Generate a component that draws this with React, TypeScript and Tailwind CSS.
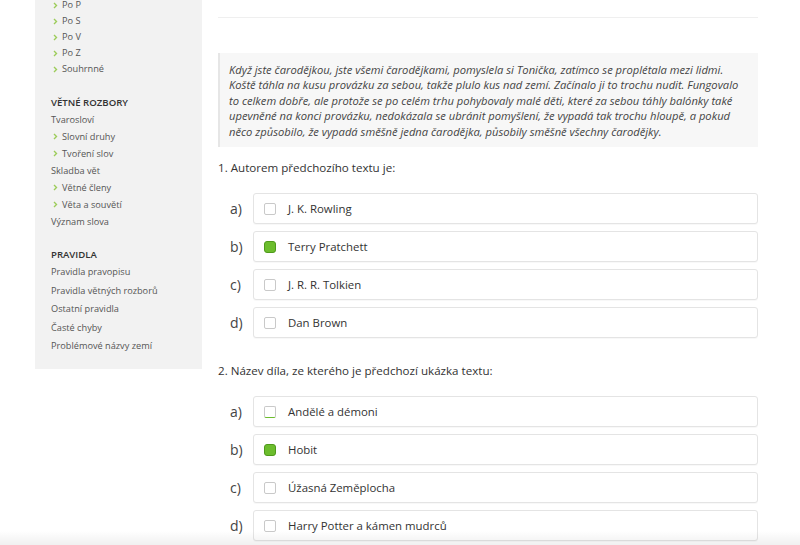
import React from 'react';

type SideItem = { label: string; kind: 'sub' | 'top' | 'head'; h: string; mt?: string };

const sideItems: SideItem[] = [
  { label: 'Po P', kind: 'sub', h: 'h-[16px]' },
  { label: 'Po S', kind: 'sub', h: 'h-[16px]' },
  { label: 'Po V', kind: 'sub', h: 'h-[16px]' },
  { label: 'Po Z', kind: 'sub', h: 'h-[16px]' },
  { label: 'Souhrnné', kind: 'sub', h: 'h-[16px]' },
  { label: 'VĚTNÉ ROZBORY', kind: 'head', h: 'h-[16px]', mt: 'mt-[18px]' },
  { label: 'Tvarosloví', kind: 'top', h: 'h-[17px]' },
  { label: 'Slovní druhy', kind: 'sub', h: 'h-[17px]' },
  { label: 'Tvoření slov', kind: 'sub', h: 'h-[17px]' },
  { label: 'Skladba vět', kind: 'top', h: 'h-[17px]' },
  { label: 'Větné členy', kind: 'sub', h: 'h-[17px]' },
  { label: 'Věta a souvětí', kind: 'sub', h: 'h-[17px]' },
  { label: 'Význam slova', kind: 'top', h: 'h-[18px]' },
  { label: 'PRAVIDLA', kind: 'head', h: 'h-[16px]', mt: 'mt-[16px]' },
  { label: 'Pravidla pravopisu', kind: 'top', h: 'h-[18.5px]' },
  { label: 'Pravidla větných rozborů', kind: 'top', h: 'h-[18.5px]' },
  { label: 'Ostatní pravidla', kind: 'top', h: 'h-[18.5px]' },
  { label: 'Časté chyby', kind: 'top', h: 'h-[18.5px]' },
  { label: 'Problémové názvy zemí', kind: 'top', h: 'h-[18.5px]' },
];

interface Option {
  letter: string;
  text: string;
  checked?: boolean;
  hover?: boolean;
}

const q1: Option[] = [
  { letter: 'a)', text: 'J. K. Rowling' },
  { letter: 'b)', text: 'Terry Pratchett', checked: true },
  { letter: 'c)', text: 'J. R. R. Tolkien' },
  { letter: 'd)', text: 'Dan Brown' },
];

const q2: Option[] = [
  { letter: 'a)', text: 'Andělé a démoni', hover: true },
  { letter: 'b)', text: 'Hobit', checked: true },
  { letter: 'c)', text: 'Úžasná Zeměplocha' },
  { letter: 'd)', text: 'Harry Potter a kámen mudrců' },
];

const quote = [
  'Když jste čarodějkou, jste všemi čarodějkami, pomyslela si Tonička, zatímco se proplétala mezi lidmi.',
  'Koště táhla na kusu provázku za sebou, takže plulo kus nad zemí. Začínalo ji to trochu nudit. Fungovalo',
  'to celkem dobře, ale protože se po celém trhu pohybovaly malé děti, které za sebou táhly balónky také',
  'upevněné na konci provázku, nedokázala se ubránit pomyšlení, že vypadá tak trochu hloupě, a pokud',
  'něco způsobilo, že vypadá směšně jedna čarodějka, působily směšně všechny čarodějky.',
];

function Chevron() {
  return (
    <svg width="5" height="7" viewBox="0 0 5 7" className="mr-[4px] shrink-0">
      <path d="M1 1 L3.5 3.5 L1 6" stroke="#9ccc5a" strokeWidth="1.4" fill="none" />
    </svg>
  );
}

function OptionRow({ opt }: { opt: Option }) {
  return (
    <div className="flex items-center">
      <span className="w-[35px] pl-[12px] text-[14px] text-[#444]">{opt.letter}</span>
      <div className="flex h-[31px] flex-1 items-center rounded-[3px] border border-[#e4e4e4] bg-white pl-[10px] shadow-[0_1px_1px_rgba(0,0,0,0.03)]">
        {opt.checked ? (
          <span className="h-[12px] w-[12px] rounded-[3px] border border-[#4f9a1c] bg-[#6cbd2d]" />
        ) : (
          <span
            className={
              'h-[12px] w-[12px] rounded-[2px] border border-[#c9c9c9] bg-white ' +
              (opt.hover ? 'border-b-[#6cbd2d]' : '')
            }
          />
        )}
        <span className="ml-[12px] text-[11.4px] text-[#333]">{opt.text}</span>
      </div>
    </div>
  );
}

export default function App() {
  return (
    <div className="relative h-[545px] w-[800px] overflow-hidden bg-white font-['Open_Sans',sans-serif]">
      <div className="flex">
        {/* sidebar */}
        <aside className="ml-[35px] w-[167px] self-start bg-[#f2f2f2] pb-[13.5px] pl-[16px]">
          <div className="mt-[-3px]">
            {sideItems.map((it, i) => (
              <div key={i} className={'flex items-center ' + it.h + ' ' + (it.mt ?? '')}>
                {it.kind === 'sub' && (
                  <span className="ml-[2px] flex items-center">
                    <Chevron />
                  </span>
                )}
                <span
                  className={
                    it.kind === 'head'
                      ? 'text-[9.6px] font-semibold text-[#333]'
                      : 'text-[9.2px] text-[#555]'
                  }
                >
                  {it.label}
                </span>
              </div>
            ))}
          </div>
        </aside>

        {/* main content */}
        <main className="ml-[16px] w-[540px]">
          <div className="mt-[17px] h-px bg-[#efefef]" />

          <blockquote className="mt-[35px] border-l-2 border-[#e6e6e6] bg-[#f7f7f7] pb-[8px] pl-[9px] pr-[10px] pt-[9px] text-[11.2px] italic leading-[15.4px] text-[#444]">
            {quote.map((line, i) => (
              <div key={i} className="whitespace-nowrap">
                {line}
              </div>
            ))}
          </blockquote>

          <p className="mt-[11px] h-[20px] text-[11.6px] leading-[20px] text-[#333]">1. Autorem předchozího textu je:</p>
          <div className="mt-[15px] flex flex-col gap-[7px]">
            {q1.map((o) => (
              <OptionRow key={o.letter} opt={o} />
            ))}
          </div>

          <p className="mt-[23px] h-[20px] text-[11.6px] leading-[20px] text-[#333]">
            2. Název díla, ze kterého je předchozí ukázka textu:
          </p>
          <div className="mt-[15px] flex flex-col gap-[7px]">
            {q2.map((o) => (
              <OptionRow key={o.letter} opt={o} />
            ))}
          </div>
        </main>
      </div>

      {/* bottom fade */}
      <div className="pointer-events-none absolute inset-x-0 bottom-0 h-[14px] bg-gradient-to-b from-transparent to-[rgba(0,0,0,0.06)]" />
    </div>
  );
}
